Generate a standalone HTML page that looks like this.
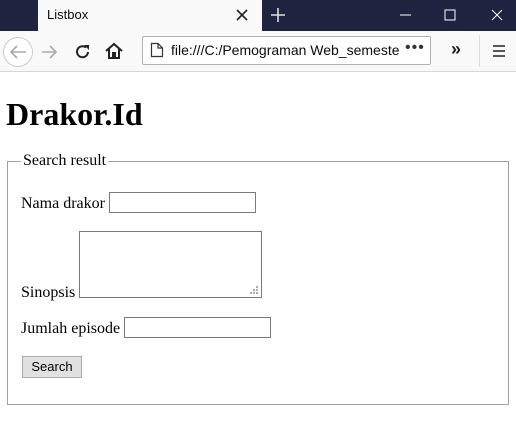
<!DOCTYPE html>
<html><head><style>
body{margin:0;width:516px;height:428px;position:relative;overflow:hidden;background:#fff;font-family:"Liberation Serif",serif;}
.a{position:absolute;}
.t{font-size:16px;color:#000;white-space:nowrap;line-height:18px;}
.inp{position:absolute;border:1px solid #7a7a7a;background:#fff;box-sizing:border-box;}
</style></head><body>
<div class="a" style="left:0;top:0;width:516px;height:31px;background:#1f2340"></div>
<div class="a" style="left:0;top:0;width:38px;height:31px;background:#202340"></div>
<div class="a" style="left:38px;top:0;width:224px;height:31px;background:#f9f9fa"></div>
<div class="a" style="left:47px;top:7px;font:13px 'Liberation Sans',sans-serif;color:#0c0c0d">Listbox</div>
<svg class="a" style="left:236px;top:9px" width="12" height="12"><path d="M1 1L11 11M11 1L1 11" stroke="#222" stroke-width="1.6"/></svg>
<svg class="a" style="left:270px;top:7px" width="16" height="16"><path d="M8 1V15M1 8H15" stroke="#ddd" stroke-width="1.6"/></svg>
<svg class="a" style="left:400px;top:14px" width="12" height="2"><path d="M0 1H11" stroke="#fff"/></svg>
<svg class="a" style="left:444px;top:9px" width="12" height="12"><rect x="1" y="1" width="10" height="10" fill="none" stroke="#fff"/></svg>
<svg class="a" style="left:491px;top:9px" width="12" height="12"><path d="M1 1L11 11M11 1L1 11" stroke="#fff"/></svg>
<div class="a" style="left:0;top:31px;width:516px;height:40px;background:#f9f9fa;border-bottom:1px solid #d7d7db"></div>
<svg class="a" style="left:2px;top:36px" width="32" height="32"><circle cx="16" cy="16" r="14.5" fill="#fff" stroke="#ccc"/><path d="M24 16H9M15 10L9 16L15 22" stroke="#aaa" stroke-width="1.6" fill="none"/></svg>
<svg class="a" style="left:40px;top:43px" width="18" height="18"><path d="M2 9H16M10 3L16 9L10 15" stroke="#aaa" stroke-width="1.6" fill="none"/></svg>
<svg class="a" style="left:74px;top:43px" width="18" height="18"><path d="M14 9A5.5 5.5 0 1 1 12 4.5" stroke="#222" stroke-width="2" fill="none"/><path d="M10 2H15V7Z" fill="#222"/></svg>
<svg class="a" style="left:104px;top:42px" width="20" height="18"><path d="M2 9L10 2L18 9M5 7V16H15V7" stroke="#222" stroke-width="2" fill="none"/><rect x="8" y="10" width="4" height="6" fill="#222"/></svg>
<div class="a" style="left:142px;top:36px;width:289px;height:29px;background:#fff;border:1px solid #b1b1b3;box-sizing:border-box;border-radius:2px"></div>
<svg class="a" style="left:150px;top:42px" width="14" height="16"><path d="M1.5 1.5H8L12.5 6V14.5H1.5Z M8 1.5V6H12.5" stroke="#333" stroke-width="1.2" fill="none"/></svg>
<div class="a" style="left:171px;top:42px;font:14px 'Liberation Sans',sans-serif;color:#0c0c0d;white-space:nowrap;width:248px;overflow:hidden">file:///C:/Pemograman Web_semester</div>
<div class="a" style="left:400px;top:37px;width:30px;height:26px;background:#fff"></div>
<div class="a" style="left:405px;top:39px;font:16px 'Liberation Sans',sans-serif;color:#333;letter-spacing:1px">•••</div>
<div class="a" style="left:451px;top:39px;font:bold 18px 'Liberation Sans',sans-serif;color:#222">»</div>
<div class="a" style="left:479px;top:35px;width:1px;height:32px;background:#ddd"></div>
<svg class="a" style="left:492px;top:44px" width="14" height="14"><path d="M1 2H13M1 7H13M1 12H13" stroke="#222" stroke-width="1.4"/></svg>

<div class="a" style="left:6px;top:96px;font:bold 32px 'Liberation Serif',serif;line-height:36px">Drakor.Id</div>
<div class="a" style="left:7px;top:161px;width:502px;height:244px;border:1px solid #a0a0a0;box-sizing:border-box"></div>
<div class="a t" style="left:21px;top:152px;background:#fff;padding:0 2px">Search result</div>
<div class="a t" style="left:21px;top:195px">Nama drakor</div>
<div class="inp" style="left:109px;top:192px;width:147px;height:21px"></div>
<div class="a t" style="left:21px;top:284px">Sinopsis</div>
<div class="inp" style="left:79px;top:231px;width:183px;height:67px"></div>
<svg class="a" style="left:250px;top:286px" width="9" height="9"><g fill="#aaa"><rect x="6" y="0" width="2" height="2"/><rect x="3" y="3" width="2" height="2"/><rect x="6" y="3" width="2" height="2"/><rect x="0" y="6" width="2" height="2"/><rect x="3" y="6" width="2" height="2"/><rect x="6" y="6" width="2" height="2"/></g></svg>
<div class="a t" style="left:21px;top:320px">Jumlah episode</div>
<div class="inp" style="left:124px;top:317px;width:147px;height:21px"></div>
<div class="a" style="left:22px;top:356px;width:60px;height:22px;background:#e1e1e1;border:1px solid #adadad;box-sizing:border-box;font:13px 'Liberation Sans',sans-serif;text-align:center;line-height:20px">Search</div>
</body></html>
